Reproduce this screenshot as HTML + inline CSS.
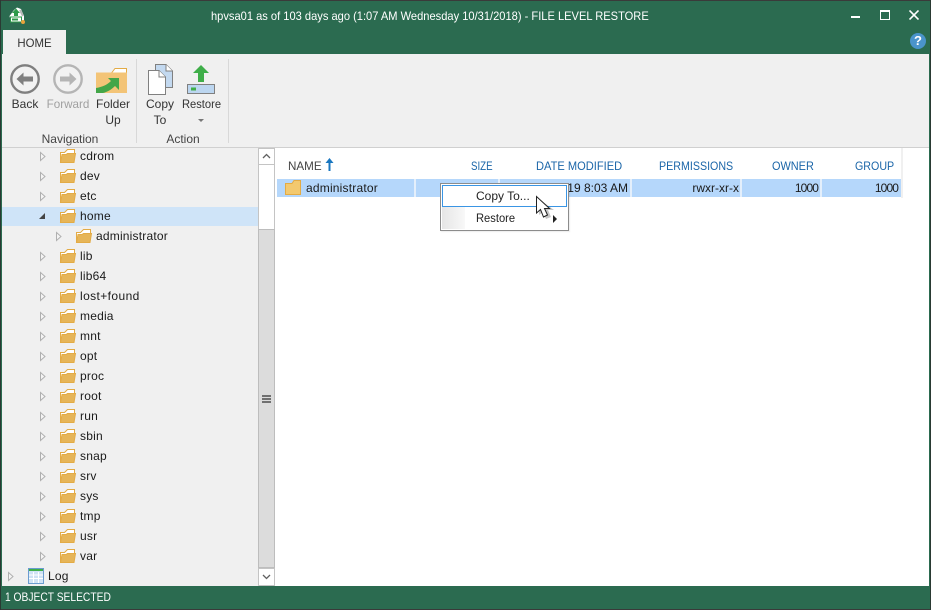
<!DOCTYPE html>
<html><head><meta charset="utf-8">
<style>
html,body{margin:0;padding:0;}
body{width:931px;height:610px;position:relative;overflow:hidden;background:#f0f0f0;font-family:"Liberation Sans",sans-serif;font-size:12px;color:#1a1a1a;}
.a{position:absolute;}
.t{position:absolute;white-space:nowrap;line-height:14px;}
.tr{letter-spacing:.2px;}
.h{color:#1a65a8;font-size:12px;transform-origin:0 50%;}
.c{text-align:center;}
</style></head><body>
<svg width="0" height="0" style="position:absolute"><defs>
<g id="fo"><path d="M.5 13.500V3.500H4.500L7.500 .5H14.500V5" fill="#fff" stroke="#e3ab45"/><path d="M.5 13.500L2 5.500H6L7.500 4.500H15.500L14 13.500Z" fill="#e6b558" stroke="#e3ab45"/></g>
<path id="ar" d="M.5.5L5 4.500L.5 8.500Z" fill="#f4f4f4" stroke="#b0b0b0"/>
</defs></svg>

<div class="a" style="left:0;top:0;width:931px;height:610px;background:#2b6b50"></div>
<div class="a" style="left:0;top:0;width:931px;height:1px;background:#3a3a3a"></div>
<div class="a" style="left:0;top:609px;width:931px;height:1px;background:#3a3a3a"></div>
<div class="a" style="left:0;top:0;width:1px;height:610px;background:#2a3a33"></div>
<div class="a" style="left:930px;top:0;width:1px;height:610px;background:#2a3a33"></div>

<svg class="a" style="left:8px;top:7px" width="19" height="18" viewBox="0 0 19 18"><path d="M6 3L9 0.500L13 2L16 9V15H3L1.500 9L3 7Z" fill="#fff"/><path d="M8 1.500L12 6H10V9H6V6H4Z" fill="#2c9a4a"/><rect x="2.500" y="10" width="11" height="5" fill="#fff" stroke="#2c9a4a"/><rect x="4" y="11.500" width="6" height="2" fill="#2c9a4a"/><path d="M12 3L15 9" stroke="#b8b8b8" stroke-width="2"/><circle cx="15" cy="15" r="2" fill="#e8a33c"/></svg>

<div class="t" style="left:211px;top:9px;color:#fff;transform-origin:0 50%;transform:scaleX(.926)">hpvsa01 as of 103 days ago (1:07 AM Wednesday 10/31/2018) - FILE LEVEL RESTORE</div>

<div class="a" style="left:851px;top:16px;width:9px;height:2px;background:#fff"></div>
<div class="a" style="left:880px;top:10px;width:8px;height:7px;border:1px solid #fff;border-top-width:2px"></div>
<svg class="a" style="left:909px;top:10px" width="10" height="10"><path d="M.5.5L9.500 9.500M9.500.5L.5 9.500" stroke="#fff" stroke-width="1.600"/></svg>
<div class="a c" style="left:910px;top:33px;width:16px;height:16px;border-radius:8px;background:#4a94cb;color:#fff;font-weight:bold;font-size:13px;line-height:16px">?</div>

<!-- tab + ribbon -->
<div class="a" style="left:3px;top:30px;width:63px;height:25px;background:#f0f0f0"></div>
<div class="t c" style="left:3px;top:36px;width:63px;color:#333;transform:scaleX(.95)">HOME</div>
<div class="a" style="left:2px;top:54px;width:927px;height:93px;background:#f0f0f0"></div>
<div class="a" style="left:2px;top:147px;width:927px;height:1px;background:#d0d0d0"></div>
<div class="a" style="left:136px;top:59px;width:1px;height:84px;background:#d8d8d8"></div>
<div class="a" style="left:228px;top:59px;width:1px;height:84px;background:#d8d8d8"></div>

<svg class="a" style="left:10px;top:64px" width="30" height="30"><circle cx="15" cy="15" r="13.700" fill="#f2f2f2" stroke="#7f7f7f" stroke-width="2.400"/><path d="M6.500 15L13.500 8.500V12.500H23V17.500H13.500V21.500Z" fill="#7f7f7f"/></svg>
<svg class="a" style="left:53px;top:64px" width="30" height="30"><circle cx="15" cy="15" r="13.700" fill="#f2f2f2" stroke="#b5b5b5" stroke-width="2.400"/><path d="M23.500 15L16.500 8.500V12.500H7V17.500H16.500V21.500Z" fill="#b5b5b5"/></svg>
<svg class="a" style="left:96px;top:68px" width="32" height="26"><path d="M15.500 5L19 .5H30.500V5" fill="#fff" stroke="#e3ab45"/><path d="M0 4.500H31V25H0Z" fill="#f3c477"/><path d="M0 25V20C6 19 11 17 15 13L12 10H23V22L19 18C15 22 11 24 7 25Z" fill="#43a648"/></svg>
<div class="t c" style="left:4px;top:97px;width:42px;color:#333">Back</div>
<div class="t c" style="left:44px;top:97px;width:48px;color:#a0a0a0;transform:scaleX(.97)">Forward</div>
<div class="t c" style="left:90px;top:97px;width:46px;color:#333">Folder</div>
<div class="t c" style="left:90px;top:113px;width:46px;color:#333">Up</div>
<svg class="a" style="left:147px;top:64px" width="28" height="32"><path d="M8.500.5H19L25.500 7V23.500H8.500Z" fill="#c3d9f0" stroke="#808080"/><path d="M19 .5V7H25.500" fill="#fff" stroke="#808080"/><path d="M1.500 6.500H12L18.500 13V30.500H1.500Z" fill="#fff" stroke="#808080"/><path d="M12 6.500V13H18.500" fill="#fff" stroke="#808080"/></svg>
<svg class="a" style="left:187px;top:65px" width="28" height="30"><path d="M14 0L22 8H17V17H11V8H6Z" fill="#3fae49"/><rect x=".5" y="19.500" width="27" height="9" fill="#bcd6f0" stroke="#808080"/><rect x="4" y="22.500" width="5" height="3" fill="#3fae49"/></svg>
<div class="t c" style="left:140px;top:97px;width:40px;color:#333">Copy</div>
<div class="t c" style="left:140px;top:113px;width:40px;color:#333">To</div>
<div class="t c" style="left:178px;top:97px;width:47px;color:#333;transform:scaleX(.93)">Restore</div>
<div class="a" style="left:198px;top:119px;width:0;height:0;border:3px solid transparent;border-top:3px solid #777"></div>
<div class="t c" style="left:20px;top:132px;width:100px;color:#444">Navigation</div>
<div class="t c" style="left:150px;top:132px;width:66px;color:#444">Action</div>

<!-- tree -->
<div class="a" style="left:2px;top:148px;width:256px;height:438px;background:#f0f0f0"></div>
<div class="a" style="left:2px;top:207px;width:256px;height:19px;background:#cfe4f8"></div>

<svg class="a" style="left:0;top:148px" width="100" height="438">
<use href="#ar" x="40" y="4"/><use href="#fo" x="60" y="1"/>
<use href="#ar" x="40" y="24"/><use href="#fo" x="60" y="21"/>
<use href="#ar" x="40" y="44"/><use href="#fo" x="60" y="41"/>
<path d="M39 71L45 65V71Z" fill="#444"/><use href="#fo" x="60" y="61"/>
<use href="#ar" x="56" y="84"/><use href="#fo" x="76" y="81"/>
<use href="#ar" x="40" y="104"/><use href="#fo" x="60" y="101"/>
<use href="#ar" x="40" y="124"/><use href="#fo" x="60" y="121"/>
<use href="#ar" x="40" y="144"/><use href="#fo" x="60" y="141"/>
<use href="#ar" x="40" y="164"/><use href="#fo" x="60" y="161"/>
<use href="#ar" x="40" y="184"/><use href="#fo" x="60" y="181"/>
<use href="#ar" x="40" y="204"/><use href="#fo" x="60" y="201"/>
<use href="#ar" x="40" y="224"/><use href="#fo" x="60" y="221"/>
<use href="#ar" x="40" y="244"/><use href="#fo" x="60" y="241"/>
<use href="#ar" x="40" y="264"/><use href="#fo" x="60" y="261"/>
<use href="#ar" x="40" y="284"/><use href="#fo" x="60" y="281"/>
<use href="#ar" x="40" y="304"/><use href="#fo" x="60" y="301"/>
<use href="#ar" x="40" y="324"/><use href="#fo" x="60" y="321"/>
<use href="#ar" x="40" y="344"/><use href="#fo" x="60" y="341"/>
<use href="#ar" x="40" y="364"/><use href="#fo" x="60" y="361"/>
<use href="#ar" x="40" y="384"/><use href="#fo" x="60" y="381"/>
<use href="#ar" x="40" y="404"/><use href="#fo" x="60" y="401"/>
<use href="#ar" x="8" y="424"/>
</svg>
<div class="t tr" style="left:80px;top:149px">cdrom</div>
<div class="t tr" style="left:80px;top:169px">dev</div>
<div class="t tr" style="left:80px;top:189px">etc</div>
<div class="t tr" style="left:80px;top:209px">home</div>
<div class="t tr" style="left:96px;top:229px">administrator</div>
<div class="t tr" style="left:80px;top:249px">lib</div>
<div class="t tr" style="left:80px;top:269px">lib64</div>
<div class="t tr" style="left:80px;top:289px;letter-spacing:.4px">lost+found</div>
<div class="t tr" style="left:80px;top:309px">media</div>
<div class="t tr" style="left:80px;top:329px">mnt</div>
<div class="t tr" style="left:80px;top:349px">opt</div>
<div class="t tr" style="left:80px;top:369px">proc</div>
<div class="t tr" style="left:80px;top:389px">root</div>
<div class="t tr" style="left:80px;top:409px">run</div>
<div class="t tr" style="left:80px;top:429px">sbin</div>
<div class="t tr" style="left:80px;top:449px">snap</div>
<div class="t tr" style="left:80px;top:469px">srv</div>
<div class="t tr" style="left:80px;top:489px">sys</div>
<div class="t tr" style="left:80px;top:509px">tmp</div>
<div class="t tr" style="left:80px;top:529px">usr</div>
<div class="t tr" style="left:80px;top:549px">var</div>
<div class="t tr" style="left:48px;top:569px">Log</div>
<svg class="a" style="left:28px;top:568px" width="16" height="16"><rect x=".5" y=".5" width="15" height="15" fill="#cfe2f5" stroke="#6a9ccf"/><rect x="1" y="1" width="14" height="2" fill="#3fae49"/><path d="M1 7H15M1 10.500H15M5.500 4V15M10.500 4V15" stroke="#fff"/></svg>

<!-- scrollbar -->
<div class="a" style="left:258px;top:148px;width:17px;height:438px;background:#fff"></div>
<div class="a" style="left:258px;top:148px;width:1px;height:438px;background:#c4c4c4"></div>
<div class="a" style="left:274px;top:148px;width:1px;height:438px;background:#c4c4c4"></div>
<div class="a" style="left:258px;top:148px;width:17px;height:1px;background:#c4c4c4"></div>
<div class="a" style="left:258px;top:164px;width:17px;height:1px;background:#c4c4c4"></div>
<div class="a" style="left:258px;top:229px;width:17px;height:339px;background:#dcdcdc;box-sizing:border-box;border:1px solid #bdbdbd"></div>
<div class="a" style="left:258px;top:568px;width:17px;height:18px;box-sizing:border-box;border:1px solid #c4c4c4;background:#fff"></div>
<svg class="a" style="left:262px;top:153px" width="9" height="6"><path d="M1 5L4.500 1.500L8 5" fill="none" stroke="#606060" stroke-width="1.300"/></svg>
<svg class="a" style="left:262px;top:574px" width="9" height="6"><path d="M1 1L4.500 4.500L8 1" fill="none" stroke="#606060" stroke-width="1.300"/></svg>
<div class="a" style="left:262px;top:395px;width:9px;height:2px;background:#707070;box-shadow:0 3px 0 #707070,0 6px 0 #707070"></div>

<!-- right pane -->
<div class="a" style="left:275px;top:148px;width:654px;height:438px;background:#fff"></div>
<div class="a" style="left:901px;top:148px;width:2px;height:50px;background:#f0f0f0"></div>
<div class="t" style="left:288px;top:159px;color:#444;transform-origin:0 50%;transform:scaleX(.97)">NAME</div>
<svg class="a" style="left:325px;top:158px" width="9" height="13"><path d="M4.500 0L8.500 5H5.500V13H3.500V5H.5Z" fill="#1a77c0"/></svg>
<div class="t h" style="left:471px;top:159px;transform:scaleX(.81)">SIZE</div>
<div class="t h" style="left:536px;top:159px;transform:scaleX(.925)">DATE MODIFIED</div>
<div class="t h" style="left:659px;top:159px;transform:scaleX(.89)">PERMISSIONS</div>
<div class="t h" style="left:772px;top:159px;transform:scaleX(.91)">OWNER</div>
<div class="t h" style="left:855px;top:159px;transform:scaleX(.89)">GROUP</div>

<div class="a" style="left:277px;top:179px;width:624px;height:18px;background:#b5d7fb"></div>
<div class="a" style="left:414px;top:179px;width:2px;height:18px;background:#e4effb"></div>
<div class="a" style="left:498px;top:179px;width:2px;height:18px;background:#e4effb"></div>
<div class="a" style="left:630px;top:179px;width:2px;height:18px;background:#e4effb"></div>
<div class="a" style="left:740px;top:179px;width:2px;height:18px;background:#e4effb"></div>
<div class="a" style="left:820px;top:179px;width:2px;height:18px;background:#e4effb"></div>
<svg class="a" style="left:285px;top:180px" width="16" height="15"><path d="M.5 14.500V3.500H7L9 .5H15.500V14.500Z" fill="#f3c96f" stroke="#e3ab45"/></svg>
<div class="t tr" style="left:306px;top:181px">administrator</div>
<div class="t" style="right:303px;top:181px">2019 8:03 AM</div>
<div class="t" style="right:192px;top:181px">rwxr-xr-x</div>
<div class="t" style="right:113px;top:181px;letter-spacing:-.9px">1000</div>
<div class="t" style="right:33px;top:181px;letter-spacing:-.9px">1000</div>

<!-- context menu -->
<div class="a" style="left:440px;top:183px;width:129px;height:48px;box-sizing:border-box;border:1px solid #8c8c8c;background:#fff;box-shadow:1px 1px 1px rgba(0,0,0,.08)"></div>
<div class="a" style="left:442px;top:207px;width:23px;height:22px;background:linear-gradient(90deg,#e6e6e6,#f8f8f8)"></div>
<div class="a" style="left:442px;top:185px;width:125px;height:22px;box-sizing:border-box;border:1px solid #3a95e4;background:#fff"></div>
<div class="t" style="left:476px;top:189px;color:#222">Copy To...</div>
<div class="t" style="left:476px;top:211px;color:#222;transform-origin:0 50%;transform:scaleX(.93)">Restore</div>
<div class="a" style="left:553px;top:215px;width:0;height:0;border:4px solid transparent;border-left:4px solid #222;border-right:0"></div>
<svg class="a" style="left:534px;top:195px" width="22" height="27"><path d="M5 4V20L9 17L12 24L17 22L14 15L20 15Z" fill="#000" opacity=".22"/><path d="M2.500 1.500V18L6.500 14.500L9.500 22L13.500 20L10.500 13.500H15.500Z" fill="#fff" stroke="#222"/></svg>

<!-- status bar -->
<div class="t" style="left:5px;top:590px;color:#fff;transform-origin:0 50%;transform:scaleX(.855)">1 OBJECT SELECTED</div>
</body></html>
